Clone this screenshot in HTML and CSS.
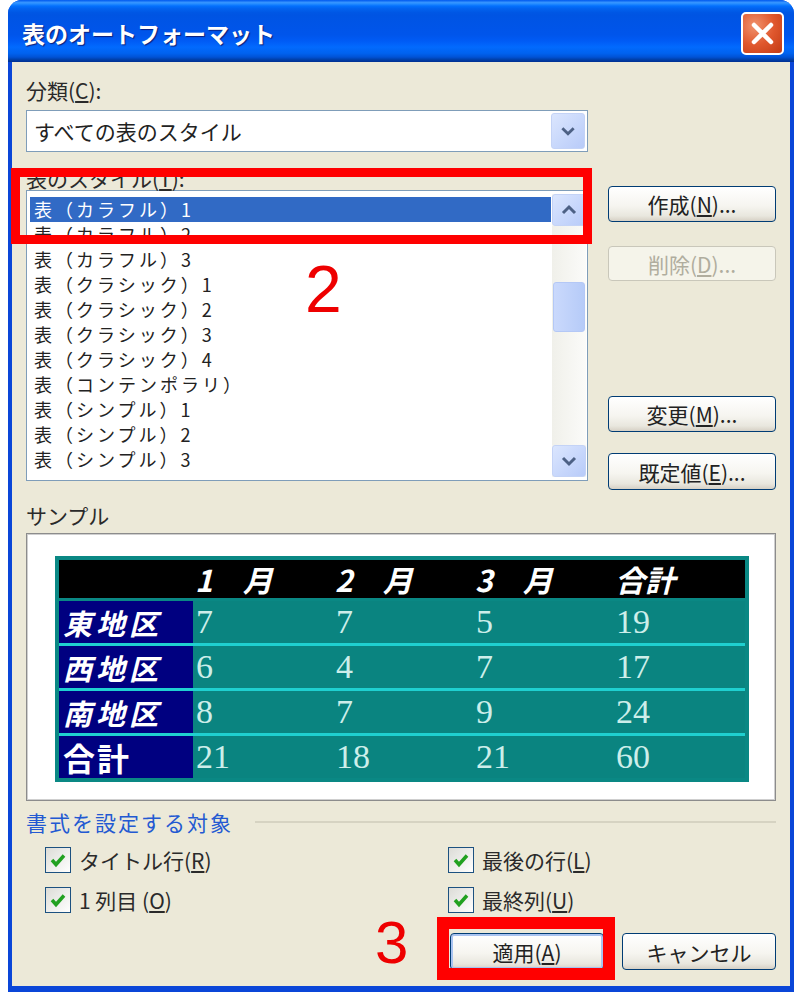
FILE: index.html
```
<!DOCTYPE html>
<html lang="ja">
<head>
<meta charset="utf-8">
<title>表のオートフォーマット</title>
<link rel="stylesheet" href="styles.css">
</head>
<body>
<div class="window">
  <div class="titlebar">
    <span class="title">表のオートフォーマット</span>
    <span class="close">
      <svg width="39" height="39" viewBox="0 0 39 39"><path d="M11 11 L28 28 M28 11 L11 28" stroke="#fff" stroke-width="4.5" stroke-linecap="round"/></svg>
    </span>
  </div>
  <div class="client">
    <div class="label label-cat">分類(<u>C</u>):</div>
    <div class="combo">
      <span class="combo-text">すべての表のスタイル</span>
      <span class="dd-btn"><svg width="34" height="36" viewBox="0 0 34 36"><path d="M11 15 L17 21 L23 15" stroke="#4d6185" stroke-width="3" fill="none"/></svg></span>
    </div>
    <div class="styles-row">
      <div class="styles-left">
        <div class="label label-styles">表のスタイル(<u>T</u>):</div>
        <div class="listbox">
          <ul class="items">
            <li class="selected">表（カラフル）1</li>
            <li>表（カラフル）2</li>
            <li>表（カラフル）3</li>
            <li>表（クラシック）1</li>
            <li>表（クラシック）2</li>
            <li>表（クラシック）3</li>
            <li>表（クラシック）4</li>
            <li>表（コンテンポラリ）</li>
            <li>表（シンプル）1</li>
            <li>表（シンプル）2</li>
            <li>表（シンプル）3</li>
          </ul>
          <div class="scrollbar">
            <span class="sb-btn"><svg width="32" height="30" viewBox="0 0 32 30"><path d="M10 18 L16 12 L22 18" stroke="#4d6185" stroke-width="3" fill="none"/></svg></span>
            <span class="sb-track"><span class="sb-thumb"></span></span>
            <span class="sb-btn"><svg width="32" height="30" viewBox="0 0 32 30"><path d="M10 12 L16 18 L22 12" stroke="#4d6185" stroke-width="3" fill="none"/></svg></span>
          </div>
        </div>
      </div>
      <div class="styles-right">
        <button class="btn btn-new">作成(<u>N</u>)...</button>
        <button class="btn btn-del" disabled>削除(<u>D</u>)...</button>
        <button class="btn btn-mod">変更(<u>M</u>)...</button>
        <button class="btn btn-def">既定値(<u>E</u>)...</button>
      </div>
    </div>
    <div class="label label-sample">サンプル</div>
    <div class="sample">
      <div class="preview">
        <div class="trow thead">
          <span class="cell first"></span>
          <span class="cell">1　月</span>
          <span class="cell">2　月</span>
          <span class="cell">3　月</span>
          <span class="cell">合計</span>
        </div>
        <div class="trow tbody">
          <span class="cell first">東地区</span>
          <span class="cell num">7</span><span class="cell num">7</span><span class="cell num">5</span><span class="cell num">19</span>
        </div>
        <div class="trow tbody sep">
          <span class="cell first">西地区</span>
          <span class="cell num">6</span><span class="cell num">4</span><span class="cell num">7</span><span class="cell num">17</span>
        </div>
        <div class="trow tbody sep">
          <span class="cell first">南地区</span>
          <span class="cell num">8</span><span class="cell num">7</span><span class="cell num">9</span><span class="cell num">24</span>
        </div>
        <div class="trow tbody sep">
          <span class="cell first total">合計</span>
          <span class="cell num">21</span><span class="cell num">18</span><span class="cell num">21</span><span class="cell num">60</span>
        </div>
      </div>
    </div>
    <div class="group-head"><span class="group-title">書式を設定する対象</span><span class="rule"></span></div>
    <div class="checks">
      <label class="check"><span class="cb"><svg width="24" height="24" viewBox="0 0 24 24"><path d="M6 12 L10 16.5 L18 7.5" stroke="#21a121" stroke-width="3.5" fill="none"/></svg></span>タイトル行(<u>R</u>)</label>
      <label class="check"><span class="cb"><svg width="24" height="24" viewBox="0 0 24 24"><path d="M6 12 L10 16.5 L18 7.5" stroke="#21a121" stroke-width="3.5" fill="none"/></svg></span>最後の行(<u>L</u>)</label>
      <label class="check"><span class="cb"><svg width="24" height="24" viewBox="0 0 24 24"><path d="M6 12 L10 16.5 L18 7.5" stroke="#21a121" stroke-width="3.5" fill="none"/></svg></span>1 列目 (<u>O</u>)</label>
      <label class="check"><span class="cb"><svg width="24" height="24" viewBox="0 0 24 24"><path d="M6 12 L10 16.5 L18 7.5" stroke="#21a121" stroke-width="3.5" fill="none"/></svg></span>最終列(<u>U</u>)</label>
    </div>
    <div class="actions">
      <button class="btn btn-apply">適用(<u>A</u>)</button>
      <button class="btn btn-cancel">キャンセル</button>
    </div>
  </div>
  <div class="anno anno-box1"></div>
  <div class="anno anno-num anno-num2">2</div>
  <div class="anno anno-num anno-num3">3</div>
  <div class="anno anno-box2"></div>
</div>
</body>
</html>
```
FILE: styles.css
```
html, body {
  margin: 0;
  padding: 0;
  background: #ffffff;
}

body {
  font-family: "Noto Sans CJK JP", "Liberation Sans", sans-serif;
  color: #222222;
}

.window {
  position: relative;
  margin-left: 8px;
  width: 786px;
  height: 992px;
  display: flex;
  flex-direction: column;
  background: #0a46d8;
  border-radius: 14px 14px 0 0;
  overflow: hidden;
}

.titlebar {
  flex: none;
  height: 62px;
  box-sizing: border-box;
  display: flex;
  align-items: flex-start;
  justify-content: space-between;
  padding: 0 10px 0 14px;
  background: linear-gradient(to bottom,
    #0058ee 0%, #3593ff 4%, #288eff 6%, #127dff 8%, #036ffc 10%,
    #0262ee 14%, #0057e5 20%, #0054e3 24%, #0055eb 56%, #005bf5 66%,
    #026afe 76%, #0062ef 86%, #0052d6 92%, #0040ab 96%, #003092 100%);
}

.title {
  margin-top: 18px;
  font-size: 23px;
  line-height: 30px;
  font-weight: bold;
  color: #ffffff;
  text-shadow: 1px 1px 1px #0a1e7a;
}

.close {
  margin-top: 12px;
  width: 43px;
  height: 43px;
  box-sizing: border-box;
  border: 2px solid #ffffff;
  border-radius: 5px;
  background: radial-gradient(circle at 30% 30%, #f0926e 0%, #e0582e 50%, #c23a14 100%);
  display: flex;
  align-items: center;
  justify-content: center;
}

.close svg {
  display: block;
}

.client {
  flex: 1;
  margin: 0 4px 6px;
  background: #ece9d8;
  padding: 14px 14px 0;
  display: flex;
  flex-direction: column;
}

.label {
  font-size: 21px;
  color: #2a2a2a;
}

.label-cat {
  line-height: 28px;
}

.combo {
  margin-top: 6px;
  width: 562px;
  height: 42px;
  box-sizing: border-box;
  border: 1px solid #7f9db9;
  background: #ffffff;
  display: flex;
  align-items: center;
}

.combo-text {
  flex: 1;
  padding-left: 7px;
  font-size: 21px;
  line-height: 36px;
}

.dd-btn {
  width: 34px;
  height: 36px;
  margin: 0 2px 0 0;
  border-radius: 3px;
  background: linear-gradient(135deg, #dbe6fe, #b8cbf9);
  border: 1px solid #c4d3f6;
  box-sizing: border-box;
  display: flex;
  align-items: center;
  justify-content: center;
}

.dd-btn svg, .sb-btn svg {
  display: block;
}

.styles-row {
  margin-top: 14px;
  display: flex;
  align-items: flex-start;
}

.styles-left {
  width: 562px;
  flex: none;
}

.label-styles {
  line-height: 24px;
}

.listbox {
  height: 291px;
  box-sizing: border-box;
  border: 1px solid #7f9db9;
  background: #ffffff;
  display: flex;
}

.items {
  flex: 1;
  list-style: none;
  margin: 0;
  padding: 6px 1px 0 3px;
}

.items li {
  height: 25px;
  line-height: 25px;
  font-size: 18px;
  letter-spacing: 3px;
  padding-left: 4px;
  color: #222222;
  white-space: nowrap;
}

.items li.selected {
  background: #316ac5;
  color: #ffffff;
}

.scrollbar {
  width: 34px;
  margin: 3px 1px 3px 0;
  display: flex;
  flex-direction: column;
  background: #f4f4f0;
}

.sb-btn {
  height: 32px;
  flex: none;
  box-sizing: border-box;
  border-radius: 3px;
  border: 1px solid #c4d3f6;
  background: linear-gradient(135deg, #dbe6fe, #b8cbf9);
  display: flex;
  align-items: center;
  justify-content: center;
}

.sb-track {
  flex: 1;
  background: linear-gradient(to right, #f0f0ea, #fbfbf9);
  padding-top: 56px;
  box-sizing: border-box;
}

.sb-thumb {
  display: block;
  height: 48px;
  margin: 0 1px;
  border-radius: 3px;
  border: 1px solid #b4c8f6;
  background: linear-gradient(to right, #cad9fc, #b6cbf8);
}

.styles-right {
  width: 168px;
  height: 315px;
  margin-left: 20px;
  padding-top: 20px;
  box-sizing: border-box;
  display: flex;
  flex-direction: column;
}

.btn {
  box-sizing: border-box;
  height: 36px;
  padding: 0;
  border: 1px solid #003c74;
  border-radius: 4px;
  background: linear-gradient(to bottom, #ffffff 0%, #f6f5f0 55%, #e9e7de 85%, #d6d0c5 100%);
  font-family: "Noto Sans CJK JP", "Liberation Sans", sans-serif;
  font-size: 21px;
  line-height: 34px;
  color: #222222;
  flex: none;
}

.btn-del {
  margin-top: 24px;
  height: 35px;
  border-color: #c9c7ba;
  background: #f5f4ea;
  color: #b0ad9e;
}

.btn-mod {
  margin-top: 115px;
}

.btn-def {
  margin-top: 21px;
  height: 37px;
}

.label-sample {
  margin-top: 22px;
  line-height: 24px;
}

.sample {
  margin-top: 6px;
  height: 268px;
  box-sizing: border-box;
  border: 1px solid #8c8c8c;
  box-shadow: inset 0 0 0 1px #cfcfcf;
  background: #ffffff;
  padding: 22px 0 0 28px;
}

.preview {
  width: 694px;
  box-sizing: border-box;
  border: 4px solid #0a8884;
  background: #0a8884;
}

.trow {
  display: grid;
  grid-template-columns: 134px 140px 140px 140px 1fr;
}

.thead {
  height: 38px;
  background: #000000;
  margin-bottom: 3px;
}

.tbody {
  height: 42px;
  background: #0a8480;
}

.tbody.sep {
  border-top: 3px solid #1fd0d0;
}

.cell {
  padding-left: 2px;
  white-space: nowrap;
}

.thead .cell {
  color: #ffffff;
  font-size: 30px;
  line-height: 38px;
  font-weight: bold;
  font-style: italic;
}

.tbody .first {
  background: #000080;
  color: #ffffff;
  font-size: 29px;
  line-height: 42px;
  font-weight: bold;
  font-style: italic;
  letter-spacing: 4px;
  padding-left: 4px;
}

.tbody .first.total {
  font-style: normal;
  font-size: 32px;
  letter-spacing: 2px;
}

.num {
  font-family: "Liberation Serif", serif;
  font-size: 34px;
  line-height: 42px;
  color: #cdeeea;
  padding-left: 3px;
}

.group-head {
  margin-top: 9px;
  height: 24px;
  display: flex;
  align-items: center;
}

.group-title {
  font-size: 21px;
  line-height: 24px;
  letter-spacing: 2px;
  color: #2359d2;
}

.rule {
  flex: 1;
  margin-left: 22px;
  height: 2px;
  background: #d6d3c2;
}

.checks {
  margin-top: 13px;
  padding-left: 19px;
  display: grid;
  grid-template-columns: 403px 1fr;
  row-gap: 14px;
}

.check {
  display: flex;
  align-items: center;
  height: 26px;
  font-size: 21px;
  color: #2a2a2a;
}

.cb {
  width: 26px;
  height: 26px;
  box-sizing: border-box;
  border: 1px solid #1c5180;
  background: linear-gradient(135deg, #dcdcd7, #ffffff);
  margin-right: 8px;
  display: flex;
  align-items: center;
  justify-content: center;
}

.cb svg {
  display: block;
}

.actions {
  margin-top: 20px;
  display: flex;
  justify-content: flex-end;
  gap: 18px;
}

.btn-apply, .btn-cancel {
  width: 154px;
  height: 37px;
}

.btn-apply {
  box-shadow: inset 0 0 0 2px #a9c3f0;
}

.anno {
  position: absolute;
}

.anno-box1 {
  left: 3px;
  top: 168px;
  width: 581px;
  height: 76px;
  box-sizing: border-box;
  border: 9px solid #ff0000;
}

.anno-box2 {
  left: 429px;
  top: 917px;
  width: 178px;
  height: 63px;
  box-sizing: border-box;
  border: 12px solid #ff0000;
}

.anno-num {
  font-family: "Liberation Sans", sans-serif;
  color: #ee0000;
  line-height: 1;
}

.anno-num2 {
  left: 297px;
  top: 256px;
  font-size: 66px;
}

.anno-num3 {
  left: 367px;
  top: 913px;
  font-size: 60px;
}
```
